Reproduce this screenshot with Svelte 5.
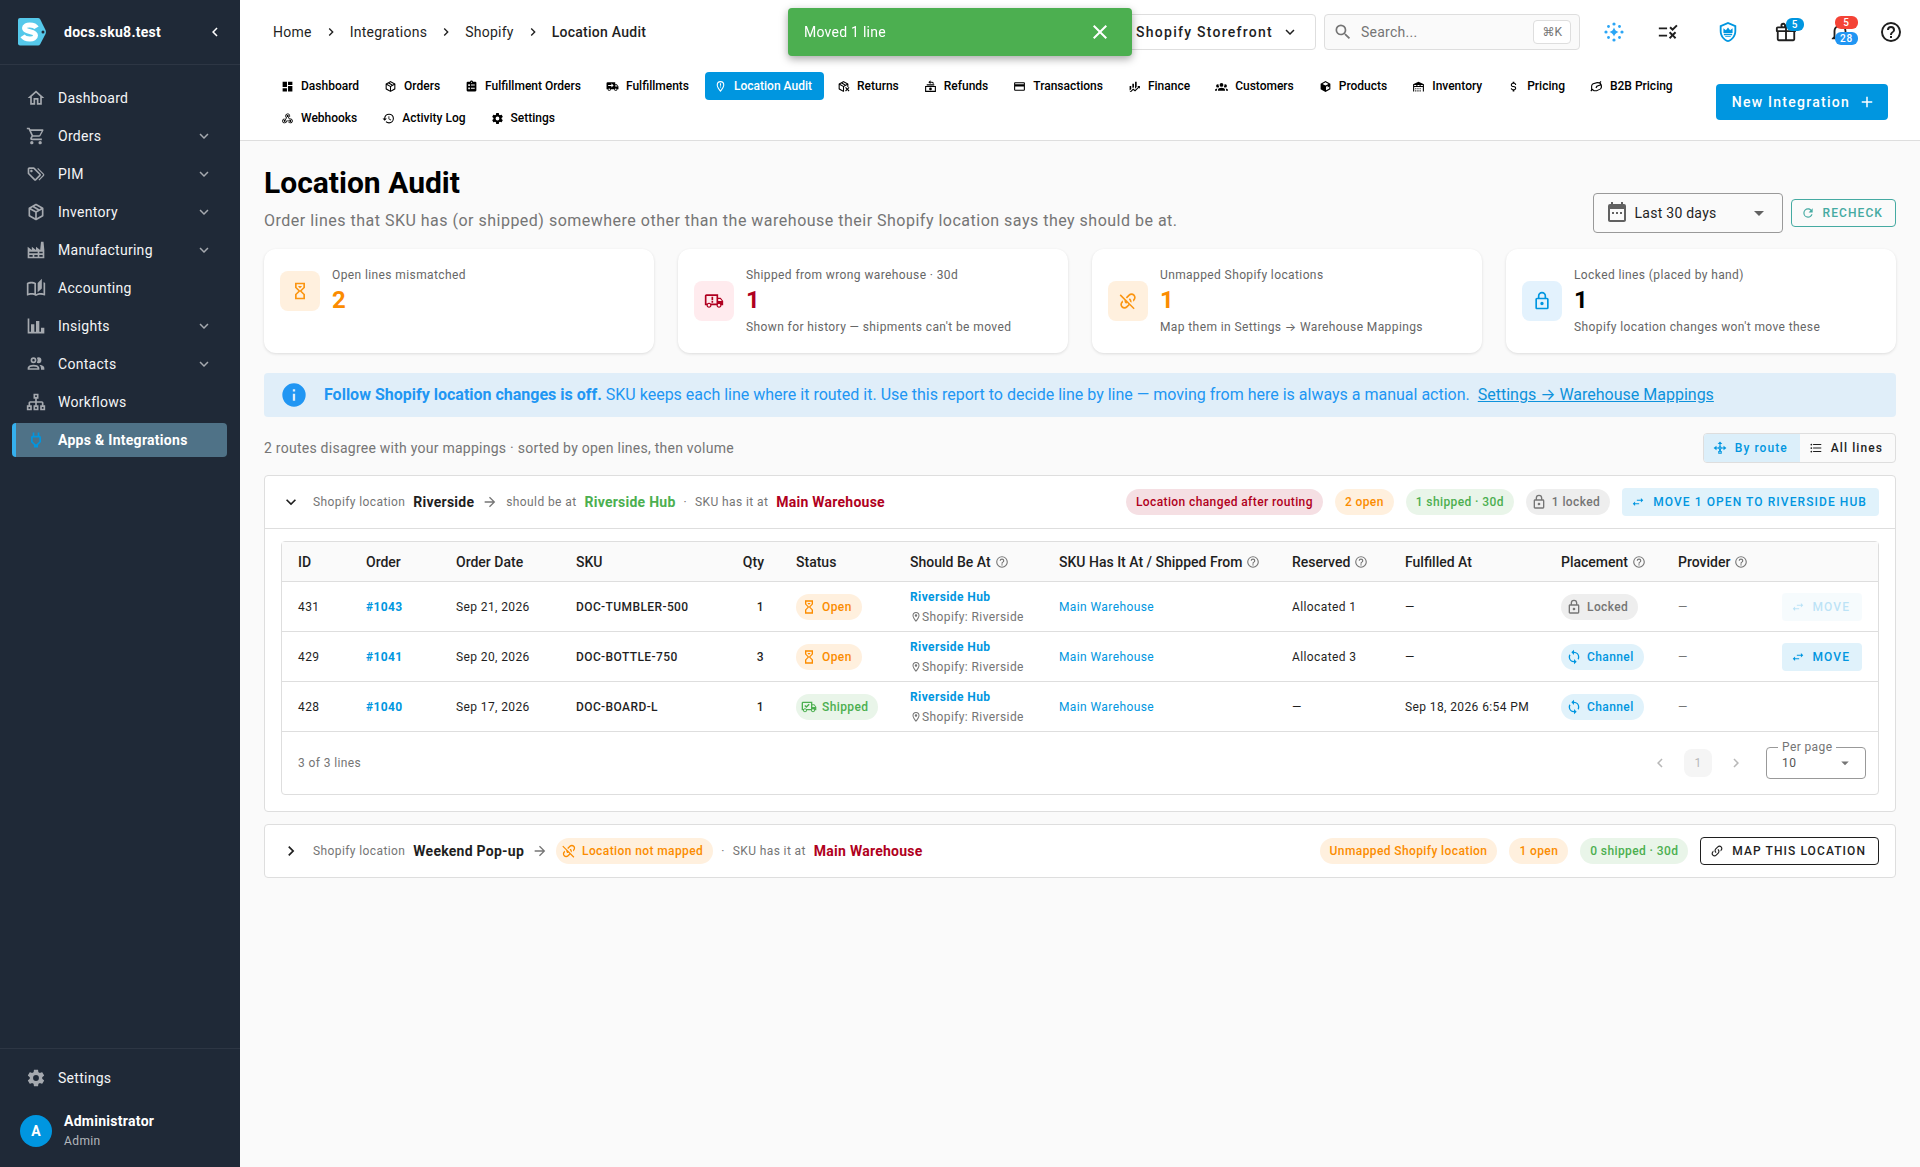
<script lang="ts">
  const icons: Record<string, string> = {
    home: "M12 5.69L17 10.19V18H15V12H9V18H7V10.19L12 5.69M12 3L2 12H5V20H11V14H13V20H19V12H22",
    cart: "M17,18A2,2 0 0,1 19,20A2,2 0 0,1 17,22C15.89,22 15,21.1 15,20C15,18.89 15.89,18 17,18M1,2H4.27L5.21,4H20A1,1 0 0,1 21,5C21,5.17 20.95,5.34 20.88,5.5L17.3,11.97C16.96,12.58 16.3,13 15.55,13H8.1L7.2,14.63L7.17,14.75A0.25,0.25 0 0,0 7.42,15H19V17H7C5.89,17 5,16.1 5,15C5,14.65 5.09,14.32 5.24,14.04L6.6,11.59L3,4H1V2M7,18A2,2 0 0,1 9,20A2,2 0 0,1 7,22C5.89,22 5,21.1 5,20C5,18.89 5.89,18 7,18M16,11L18.78,6H6.14L8.5,11H16Z",
    tags: "M6.5 10C7.3 10 8 9.3 8 8.5S7.3 7 6.5 7 5 7.7 5 8.5 5.7 10 6.5 10M9 6L16 13L11 18L4 11V6H9M9 4H4C2.9 4 2 4.9 2 6V11C2 11.6 2.2 12.1 2.6 12.4L9.6 19.4C9.9 19.8 10.4 20 11 20S12.1 19.8 12.4 19.4L17.4 14.4C17.8 14 18 13.5 18 13C18 12.4 17.8 11.9 17.4 11.6L10.4 4.6C10.1 4.2 9.6 4 9 4M13.5 5.7L14.5 4.7L21.4 11.6C21.8 12 22 12.5 22 13S21.8 14.1 21.4 14.4L16 19.8L15 18.8L20.7 13L13.5 5.7Z",
    box: "M21,16.5C21,16.88 20.79,17.21 20.47,17.38L12.57,21.82C12.41,21.94 12.21,22 12,22C11.79,22 11.59,21.94 11.43,21.82L3.53,17.38C3.21,17.21 3,16.88 3,16.5V7.5C3,7.12 3.21,6.79 3.53,6.62L11.43,2.18C11.59,2.06 11.79,2 12,2C12.21,2 12.41,2.06 12.57,2.18L20.47,6.62C20.79,6.79 21,7.12 21,7.5V16.5M12,4.15L10.11,5.22L16,8.61L17.96,7.5L12,4.15M6.04,7.5L12,10.85L13.96,9.75L8.08,6.35L6.04,7.5M5,15.91L11,19.29V12.58L5,9.21V15.91M19,15.91V9.21L13,12.58V19.29L19,15.91Z",
    factory: "M4,18V20H8V18H4M4,14V16H14V14H4M10,18V20H14V18H10M16,14V16H20V14H16M16,18V20H20V18H16M2,22V8L7,12V8L12,12V8L17,12L18,2H21L22,12V22H2Z",
    book: "M19 1L14 6V17L19 12.5V1M21 5V18.5C19.9 18.15 18.7 18 17.5 18C15.8 18 13.35 18.65 12 19.5V6C10.55 4.9 8.45 4.5 6.5 4.5C4.55 4.5 2.45 4.9 1 6V20.65C1 20.9 1.25 21.15 1.5 21.15C1.6 21.15 1.65 21.1 1.75 21.1C3.1 20.45 5.05 20 6.5 20C8.45 20 10.55 20.4 12 21.5C13.35 20.65 15.8 20 17.5 20C19.15 20 20.85 20.3 22.25 21.05C22.35 21.1 22.4 21.1 22.5 21.1C22.75 21.1 23 20.85 23 20.6V6C22.4 5.55 21.75 5.25 21 5M10 18.41C8.75 18.09 7.5 18 6.5 18C5.44 18 4.18 18.19 3 18.5V7.13C3.91 6.73 5.14 6.5 6.5 6.5C7.86 6.5 9.09 6.73 10 7.13V18.41Z",
    chart: "M22,21H2V3H4V19H6V10H10V19H12V6H16V19H18V14H22V21Z",
    contacts: "M13.07 10.41A5 5 0 0 0 13.07 4.59A3.39 3.39 0 0 1 15 4A3.5 3.5 0 0 1 15 11A3.39 3.39 0 0 1 13.07 10.41M5.5 7.5A3.5 3.5 0 1 1 9 11A3.5 3.5 0 0 1 5.5 7.5M7.5 7.5A1.5 1.5 0 1 0 9 6A1.5 1.5 0 0 0 7.5 7.5M16 17V19H2V17S2 13 9 13 16 17 16 17M14 17C13.86 16.22 12.67 15 9 15S4.07 16.31 4 17M15.95 13A5.32 5.32 0 0 1 18 17V19H22V17S22 13.37 15.94 13Z",
    sitemap: "M9 2V8H11V11H5C3.89 11 3 11.89 3 13V16H1V22H7V16H5V13H11V16H9V22H15V16H13V13H19V16H17V22H23V16H21V13C21 11.89 20.11 11 19 11H13V8H15V2H9M11 4H13V6H11V4M3 18H5V20H3V18M11 18H13V20H11V18M19 18H21V20H19V18Z",
    plug: "M16 7V3H14V7H10V3H8V7C7 7 6 8 6 9V14.5L9.5 18V21H14.5V18L18 14.5V9C18 8 17 7 16 7M16 13.67L12.67 17H11.33L8 13.67V9H16V13.67Z",
    cog: "M12,15.5A3.5,3.5 0 0,1 8.5,12A3.5,3.5 0 0,1 12,8.5A3.5,3.5 0 0,1 15.5,12A3.5,3.5 0 0,1 12,15.5M19.43,12.97C19.47,12.65 19.5,12.33 19.5,12C19.5,11.67 19.47,11.34 19.43,11L21.54,9.37C21.73,9.22 21.78,8.95 21.66,8.73L19.66,5.27C19.54,5.05 19.27,4.96 19.05,5.05L16.56,6.05C16.04,5.66 15.5,5.32 14.87,5.07L14.5,2.42C14.46,2.18 14.25,2 14,2H10C9.75,2 9.54,2.18 9.5,2.42L9.13,5.07C8.5,5.32 7.96,5.66 7.44,6.05L4.95,5.05C4.73,4.96 4.46,5.05 4.34,5.27L2.34,8.73C2.21,8.95 2.27,9.22 2.46,9.37L4.57,11C4.53,11.34 4.5,11.67 4.5,12C4.5,12.33 4.53,12.65 4.57,12.97L2.46,14.63C2.27,14.78 2.21,15.05 2.34,15.27L4.34,18.73C4.46,18.95 4.73,19.03 4.95,18.95L7.44,17.94C7.96,18.34 8.5,18.68 9.13,18.93L9.5,21.58C9.54,21.82 9.75,22 10,22H14C14.25,22 14.46,21.82 14.5,21.58L14.87,18.93C15.5,18.67 16.04,18.34 16.56,17.94L19.05,18.95C19.27,19.03 19.54,18.95 19.66,18.73L21.66,15.27C21.78,15.05 21.73,14.78 21.54,14.63L19.43,12.97Z",
    down: "M7.41,8.58L12,13.17L16.59,8.58L18,10L12,16L6,10L7.41,8.58Z",
    right: "M8.59,16.58L13.17,12L8.59,7.41L10,6L16,12L10,18L8.59,16.58Z",
    left: "M15.41,16.58L10.83,12L15.41,7.41L14,6L8,12L14,18L15.41,16.58Z",
    caret: "M7,10L12,15L17,10H7Z",
    plus: "M19,13H13V19H11V13H5V11H11V5H13V11H19V13Z",
    close: "M19,6.41L17.59,5L12,10.59L6.41,5L5,6.41L10.59,12L5,17.59L6.41,19L12,13.41L17.59,19L19,17.59L13.41,12L19,6.41Z",
    arrow: "M4,11V13H16L10.5,18.5L11.92,19.92L19.84,12L11.92,4.08L10.5,5.5L16,11H4Z",
    search: "M9.5,3A6.5,6.5 0 0,1 16,9.5C16,11.11 15.41,12.59 14.44,13.73L14.71,14H15.5L20.5,19L19,20.5L14,15.5V14.71L13.73,14.44C12.59,15.41 11.11,16 9.5,16A6.5,6.5 0 0,1 3,9.5A6.5,6.5 0 0,1 9.5,3M9.5,5C7,5 5,7 5,9.5C5,12 7,14 9.5,14C12,14 14,12 14,9.5C14,7 12,5 9.5,5Z",
    dashboard: "M13,3V9H21V3M13,21H21V11H13M3,21H11V15H3M3,13H11V3H3V13Z",
    clipboard: "M19,3H14.82C14.4,1.84 13.3,1 12,1C10.7,1 9.6,1.84 9.18,3H5A2,2 0 0,0 3,5V19A2,2 0 0,0 5,21H19A2,2 0 0,0 21,19V5A2,2 0 0,0 19,3M12,3A1,1 0 0,1 13,4A1,1 0 0,1 12,5A1,1 0 0,1 11,4A1,1 0 0,1 12,3M6,8H9V11H6V8M11,8.5H18V10H11V8.5M6,14H9V17H6V14M11,14.5H18V16H11V14.5Z",
    truck: "M3,4A2,2 0 0,0 1,6V17H3A3,3 0 0,0 6,20A3,3 0 0,0 9,17H15A3,3 0 0,0 18,20A3,3 0 0,0 21,17H23V12L20,8H17V4H3M10,6L14,10L10,14V11H4V9H10V6M17,9.5H19.5L21.47,12H17V9.5M6,15.5A1.5,1.5 0 0,1 7.5,17A1.5,1.5 0 0,1 6,18.5A1.5,1.5 0 0,1 4.5,17A1.5,1.5 0 0,1 6,15.5M18,15.5A1.5,1.5 0 0,1 19.5,17A1.5,1.5 0 0,1 18,18.5A1.5,1.5 0 0,1 16.5,17A1.5,1.5 0 0,1 18,15.5Z",
    pinAlert: "M11,6H13V10.5H11V6M11,12H13V14H11V12M12,2A7,7 0 0,1 19,9C19,14.25 12,22 12,22C12,22 5,14.25 5,9A7,7 0 0,1 12,2M12,4A5,5 0 0,0 7,9C7,10 7,12 12,18.71C17,12 17,10 17,9A5,5 0 0,0 12,4Z",
    pin: "M12,6.5A2.5,2.5 0 0,1 14.5,9A2.5,2.5 0 0,1 12,11.5A2.5,2.5 0 0,1 9.5,9A2.5,2.5 0 0,1 12,6.5M12,2A7,7 0 0,1 19,9C19,14.25 12,22 12,22C12,22 5,14.25 5,9A7,7 0 0,1 12,2M12,4A5,5 0 0,0 7,9C7,10 7,12 12,18.71C17,12 17,10 17,9A5,5 0 0,0 12,4Z",
    returns: "M12,2L11.43,2.18L3.53,6.62L3,7.5V16.5L3.53,17.38L11.43,21.82L13,21.5V12.58L19,9.21V13H21V7.5L20.47,6.62L12.57,2.18L12,2M12,4.15L17.96,7.5L16,8.61L10.11,5.22L12,4.15M8.08,6.35L13.96,9.75L12,10.85L6.04,7.5L8.08,6.35M5,9.21L11,12.58V19.29L5,15.91V9.21M15,14.5L17.5,17L15,19.5L16.5,21L19,18.5L21.5,21L23,19.5L20.5,17L23,14.5L21.5,13L19,15.5L16.5,13L15,14.5Z",
    refunds: "M2,11H22V22H2V11M4,13V20H20V13H4M12,14A2.5,2.5 0 0,1 12,19A2.5,2.5 0 0,1 12,14M5,8H19V10H5V8M8,4L12,0.5V3H15A3,3 0 0,1 18,6V7H16V6A1,1 0 0,0 15,5H12V7.5L8,4Z",
    card: "M20,8H4V6H20M20,18H4V12H20M20,4H4C2.89,4 2,4.89 2,6V18A2,2 0 0,0 4,20H20A2,2 0 0,0 22,18V6C22,4.89 21.1,4 20,4Z",
    finance: "M6,16.5L3,19.44V11H6M11,14.66L9.43,13.32L8,14.64V7H11M16,13L13,16V3H16M18.81,12.81L17,11H22V16L20.21,14.21L13,21.36L9.53,18.34L5.75,22H3L9.47,15.66L13,18.64",
    group: "M12,5.5A3.5,3.5 0 0,1 15.5,9A3.5,3.5 0 0,1 12,12.5A3.5,3.5 0 0,1 8.5,9A3.5,3.5 0 0,1 12,5.5M5,8C5.56,8 6.08,8.15 6.53,8.42C6.38,9.85 6.8,11.27 7.66,12.38C7.16,13.34 6.16,14 5,14A3,3 0 0,1 2,11A3,3 0 0,1 5,8M19,8A3,3 0 0,1 22,11A3,3 0 0,1 19,14C17.84,14 16.84,13.34 16.34,12.38C17.2,11.27 17.62,9.85 17.47,8.42C17.92,8.15 18.44,8 19,8M5.5,18.25C5.5,16.18 8.41,14.5 12,14.5C15.59,14.5 18.5,16.18 18.5,18.25V20H5.5V18.25M0,20V18.5C0,17.11 1.89,15.94 4.45,15.6C3.86,16.28 3.5,17.22 3.5,18.25V20H0M24,20H20.5V18.25C20.5,17.22 20.14,16.28 19.55,15.6C22.11,15.94 24,17.11 24,18.5V20Z",
    product: "M12,2L21,7V17L12,22L3,17V7L12,2M12,4.2L6.5,7.3L12,10.3L17.5,7.3L12,4.2M13,12.3V19L19,15.7V12L16,13.7V10.7L13,12.3Z",
    warehouse: "M6,19H8V21H6V19M12,3L2,8V21H4V13H20V21H22V8L12,3M8,11H4V9H8V11M14,11H10V9H14V11M20,11H16V9H20V11M6,15H8V17H6V15M10,15H12V17H10V15M10,19H12V21H10V19M14,19H16V21H14V19M14,15H16V17H14V15Z",
    dollar: "M7,15H9C9,16.08 10.37,17 12,17C13.63,17 15,16.08 15,15C15,13.9 13.96,13.5 11.76,12.97C9.64,12.44 7,11.78 7,9C7,7.21 8.47,5.69 10.5,5.18V3H13.5V5.18C15.53,5.69 17,7.21 17,9H15C15,7.92 13.63,7 12,7C10.37,7 9,7.92 9,9C9,10.1 10.04,10.5 12.24,11.03C14.36,11.56 17,12.22 17,15C17,16.79 15.53,18.31 13.5,18.82V21H10.5V18.82C8.47,18.31 7,16.79 7,15Z",
    history: "M13.5,8H12V13L16.28,15.54L17,14.33L13.5,12.25V8M13,3A9,9 0 0,0 4,12H1L4.96,16.03L9,12H6A7,7 0 0,1 13,5A7,7 0 0,1 20,12A7,7 0 0,1 13,19C11.07,19 9.32,18.21 8.06,16.94L6.64,18.36C8.27,20 10.5,21 13,21A9,9 0 0,0 22,12A9,9 0 0,0 13,3",
    webhook: "M10.46,19C9,21.07 6.15,21.59 4.09,20.15C2.04,18.71 1.56,15.84 3,13.75C3.87,12.5 5.21,11.83 6.58,11.77L6.63,13.2C5.72,13.27 4.84,13.74 4.27,14.56C3.27,16 3.58,17.94 4.95,18.91C6.33,19.87 8.26,19.5 9.26,18.07C9.57,17.62 9.75,17.13 9.82,16.63V15.62L15.4,15.58L15.47,15.47C16,14.55 17.15,14.23 18.05,14.75C18.95,15.27 19.26,16.43 18.73,17.35C18.2,18.26 17.04,18.58 16.14,18.06C15.73,17.83 15.44,17.46 15.31,17.04L11.24,17.06C11.13,17.73 10.87,18.38 10.46,19M17.74,11.86C20.27,12.17 22.07,14.44 21.76,16.93C21.45,19.43 19.15,21.2 16.62,20.89C15.13,20.71 13.9,19.86 13.19,18.68L14.43,17.96C14.92,18.73 15.75,19.28 16.75,19.41C18.5,19.62 20.05,18.43 20.26,16.76C20.47,15.09 19.23,13.56 17.5,13.35C16.96,13.29 16.44,13.36 15.97,13.53L15.12,13.97L12.54,9.2H12.32C11.26,9.16 10.41,8.29 10.44,7.25C10.47,6.21 11.4,5.4 12.45,5.44C13.5,5.5 14.33,6.35 14.3,7.39C14.28,7.83 14.11,8.23 13.84,8.54L15.74,12.05C16.36,11.85 17.04,11.78 17.74,11.86M8.25,9.14C7.25,6.79 8.31,4.1 10.62,3.12C12.94,2.14 15.62,3.25 16.62,5.6C17.21,6.97 17.09,8.47 16.42,9.67L15.18,8.95C15.6,8.14 15.67,7.15 15.27,6.22C14.59,4.62 12.78,3.85 11.23,4.5C9.67,5.16 8.97,7 9.65,8.6C9.93,9.26 10.4,9.77 10.97,10.11L11.36,10.32L8.29,15.31C8.32,15.36 8.36,15.42 8.39,15.5C8.88,16.41 8.54,17.56 7.62,18.05C6.71,18.54 5.56,18.18 5.06,17.24C4.57,16.31 4.91,15.16 5.83,14.67C6.22,14.46 6.65,14.41 7.06,14.5L9.37,10.73C8.9,10.3 8.5,9.76 8.25,9.14Z",
    handshake: "M21.7,8.7L19.4,4.6L21,3.5L20,2L17.2,4.1L13.2,3.6L5.4,6.2C3.5,7.2 2,9.8 2,12V18L0.8,20L2.4,21L4.5,18.8L7,20.9H12.5L20,17C22,15.5 22.5,13 22,10.5L21.7,8.7M18.5,16L12,19H8L4,15.5V12C4,10.3 5,8.6 6.5,8L13,5.8L17.5,6.4L18.5,8.2L12,10.5L10,14L12,15.3L14,12L19.5,10.3C20.4,12.3 20,14.5 18.5,16Z",
    checks: "M2,7H11V9H2V7M2,15H11V17H2V15M22.5,5.5L17,11L13.5,7.5L15,6L17,8L21,4L22.5,5.5M21,13L18.5,15.5L21,18L19.5,19.5L17,17L14.5,19.5L13,18L15.5,15.5L13,13L14.5,11.5L17,14L19.5,11.5L21,13Z",
    shield: "M21,11C21,16.55 17.16,21.74 12,23C6.84,21.74 3,16.55 3,11V5L12,1L21,5V11M12,21C15.75,20 19,15.54 19,11.22V6.3L12,3.18L5,6.3V11.22C5,15.54 8.25,20 12,21M7,8L9.7,10L12,7L14.3,10L17,8V13H7V8M7.5,14H16.5V15.5H7.5V14M9,16.5H15V17.5H9V16.5Z",
    gift: "M22,12V20A2,2 0 0,1 20,22H4A2,2 0 0,1 2,20V12A1,1 0 0,1 1,11V8A2,2 0 0,1 3,6H6.17C6.06,5.69 6,5.35 6,5A3,3 0 0,1 9,2C10,2 10.88,2.5 11.43,3.24V3.23L12,4L12.57,3.23V3.24C13.12,2.5 14,2 15,2A3,3 0 0,1 18,5C18,5.35 17.94,5.69 17.83,6H21A2,2 0 0,1 23,8V11A1,1 0 0,1 22,12M4,20H11V12H4V20M20,20V12H13V20H20M9,4A1,1 0 0,0 8,5A1,1 0 0,0 9,6A1,1 0 0,0 10,5A1,1 0 0,0 9,4M15,4A1,1 0 0,0 14,5A1,1 0 0,0 15,6A1,1 0 0,0 16,5A1,1 0 0,0 15,4M3,8V10H11V8H3M13,8V10H21V8H13Z",
    bell: "M10 21H14C14 22.1 13.1 23 12 23S10 22.1 10 21M21 19V20H3V19L5 17V11C5 7.9 7 5.2 10 4.3V4C10 2.9 10.9 2 12 2S14 2.9 14 4V4.3C17 5.2 19 7.9 19 11V17L21 19M17 11C17 8.2 14.8 6 12 6S7 8.2 7 11V18H17V11Z",
    help: "M11,18H13V16H11V18M12,2A10,10 0 0,0 2,12A10,10 0 0,0 12,22A10,10 0 0,0 22,12A10,10 0 0,0 12,2M12,20C7.59,20 4,16.41 4,12C4,7.59 7.59,4 12,4C16.41,4 20,7.59 20,12C20,16.41 16.41,20 12,20M12,6A4,4 0 0,0 8,10H10A2,2 0 0,1 12,8A2,2 0 0,1 14,10C14,12 11,11.75 11,15H13C13,12.75 16,12.5 16,10A4,4 0 0,0 12,6Z",
    calendar: "M7,11H9V13H7V11M21,5V19C21,20.11 20.11,21 19,21H5C3.89,21 3,20.1 3,19V5A2,2 0 0,1 5,3H6V1H8V3H16V1H18V3H19A2,2 0 0,1 21,5M5,19H19V8H5V19M15,13V11H17V13H15M11,13V11H13V13H11Z",
    refresh: "M17.65,6.35C16.2,4.9 14.21,4 12,4A8,8 0 0,0 4,12A8,8 0 0,0 12,20C15.73,20 18.84,17.45 19.73,14H17.65C16.83,16.33 14.61,18 12,18A6,6 0 0,1 6,12A6,6 0 0,1 12,6C13.66,6 15.14,6.69 16.22,7.78L13,11H20V4L17.65,6.35Z",
    hourglass: "M6,2H18V8L14,12L18,16V22H6V16L10,12L6,8V2M16,16.5L12,12.5L8,16.5V20H16V16.5M12,11.5L16,7.5V4H8V7.5L12,11.5M10,6H14V6.75L12,8.75L10,6.75V6Z",
    truckAlert: "M18 18.5C18.83 18.5 19.5 17.83 19.5 17S18.83 15.5 18 15.5 16.5 16.17 16.5 17 17.17 18.5 18 18.5M19.5 9.5H17V12H21.46L19.5 9.5M6 18.5C6.83 18.5 7.5 17.83 7.5 17S6.83 15.5 6 15.5 4.5 16.17 4.5 17 5.17 18.5 6 18.5M20 8L23 12V17H21C21 18.66 19.66 20 18 20S15 18.66 15 17H9C9 18.66 7.66 20 6 20S3 18.66 3 17H1V6C1 4.89 1.89 4 3 4H17V8H20M3 6V15H3.76C4.31 14.39 5.11 14 6 14S7.69 14.39 8.24 15H15V6H3M9 7H11V11H9V7M9 12H11V14H9V12Z",
    truckCheck: "M18 18.5C18.83 18.5 19.5 17.83 19.5 17S18.83 15.5 18 15.5 16.5 16.17 16.5 17 17.17 18.5 18 18.5M19.5 9.5H17V12H21.46L19.5 9.5M6 18.5C6.83 18.5 7.5 17.83 7.5 17S6.83 15.5 6 15.5 4.5 16.17 4.5 17 5.17 18.5 6 18.5M20 8L23 12V17H21C21 18.66 19.66 20 18 20S15 18.66 15 17H9C9 18.66 7.66 20 6 20S3 18.66 3 17H1V6C1 4.89 1.89 4 3 4H17V8H20M3 6V15H3.76C4.31 14.39 5.11 14 6 14S7.69 14.39 8.24 15H15V6H3M5 10.5L6.5 9L8 10.5L11.5 7L13 8.5L8 13.5L5 10.5Z",
    unlink: "M2,5.27L3.28,4L20,20.72L18.73,22L13.9,17.17L11.29,19.78C9.34,21.73 6.17,21.73 4.22,19.78C2.27,17.83 2.27,14.66 4.22,12.71L5.71,11.22C5.7,12.04 5.83,12.86 6.11,13.65L5.64,14.12C4.46,15.29 4.46,17.19 5.64,18.36C6.81,19.54 8.71,19.54 9.88,18.36L12.5,15.76L10.88,14.15C10.87,14.39 10.77,14.64 10.59,14.83C10.2,15.22 9.56,15.22 9.17,14.83C8.12,13.77 7.63,12.37 7.72,11L2,5.27M12.71,4.22C14.66,2.27 17.83,2.27 19.78,4.22C21.73,6.17 21.73,9.34 19.78,11.29L18.29,12.78C18.3,11.96 18.17,11.14 17.89,10.36L18.36,9.88C19.54,8.71 19.54,6.81 18.36,5.64C17.19,4.46 15.29,4.46 14.12,5.64L10.79,8.97L9.38,7.55L12.71,4.22M13.41,9.17C13.8,8.78 14.44,8.78 14.83,9.17C16.2,10.54 16.61,12.5 16.06,14.23L14.28,12.46C14.23,11.78 13.94,11.11 13.41,10.59C13,10.2 13,9.56 13.41,9.17Z",
    link: "M10.59,13.41C11,13.8 11,14.44 10.59,14.83C10.2,15.22 9.56,15.22 9.17,14.83C7.22,12.88 7.22,9.71 9.17,7.76V7.76L12.71,4.22C14.66,2.27 17.83,2.27 19.78,4.22C21.73,6.17 21.73,9.34 19.78,11.29L18.29,12.78C18.3,11.96 18.17,11.14 17.89,10.36L18.36,9.88C19.54,8.71 19.54,6.81 18.36,5.64C17.19,4.46 15.29,4.46 14.12,5.64L10.59,9.17C9.41,10.34 9.41,12.24 10.59,13.41M13.41,9.17C13.8,8.78 14.44,8.78 14.83,9.17C16.78,11.12 16.78,14.29 14.83,16.24V16.24L11.29,19.78C9.34,21.73 6.17,21.73 4.22,19.78C2.27,17.83 2.27,14.66 4.22,12.71L5.71,11.22C5.7,12.04 5.83,12.86 6.11,13.65L5.64,14.12C4.46,15.29 4.46,17.19 5.64,18.36C6.81,19.54 8.71,19.54 9.88,18.36L13.41,14.83C14.59,13.66 14.59,11.76 13.41,10.59C13,10.2 13,9.56 13.41,9.17Z",
    lock: "M12,17C10.89,17 10,16.1 10,15C10,13.89 10.89,13 12,13A2,2 0 0,1 14,15A2,2 0 0,1 12,17M18,20V10H6V20H18M18,8A2,2 0 0,1 20,10V20A2,2 0 0,1 18,22H6C4.89,22 4,21.1 4,20V10C4,8.89 4.89,8 6,8H7V6A5,5 0 0,1 12,1A5,5 0 0,1 17,6V8H18M12,3A3,3 0 0,0 9,6V8H15V6A3,3 0 0,0 12,3Z",
    info: "M13,9H11V7H13M13,17H11V11H13M12,2A10,10 0 0,0 2,12A10,10 0 0,0 12,22A10,10 0 0,0 22,12A10,10 0 0,0 12,2Z",
    routes: "M12,1L16,5H13V9.2A3,3 0 0,1 14.8,11H18V8L23,12L18,16V13H14.8A3,3 0 0,1 13.5,14.6V17H15V22H9V17H10.5V14.6A3,3 0 0,1 9.2,13H6V16L1,12L6,8V11H9.2A3,3 0 0,1 11,9.2V5H8L12,1M12,11A1,1 0 0,0 12,13A1,1 0 0,0 12,11M11.2,18.5V20.5H12.800V18.5H11.2Z",
    list: "M7,5H21V7H7V5M7,13V11H21V13H7M4,4.5A1.5,1.5 0 0,1 5.5,6A1.5,1.5 0 0,1 4,7.5A1.5,1.5 0 0,1 2.5,6A1.5,1.5 0 0,1 4,4.5M4,10.5A1.5,1.5 0 0,1 5.5,12A1.5,1.5 0 0,1 4,13.5A1.5,1.5 0 0,1 2.5,12A1.5,1.5 0 0,1 4,10.5M7,19V17H21V19H7M4,16.5A1.5,1.5 0 0,1 5.5,18A1.5,1.5 0 0,1 4,19.5A1.5,1.5 0 0,1 2.5,18A1.5,1.5 0 0,1 4,16.5Z",
    swap: "M21,9L17,5V8H10V10H17V13M7,11L3,15L7,19V16H14V14H7V11Z",
    sync: "M12,18A6,6 0 0,1 6,12C6,11 6.25,10.03 6.7,9.2L5.24,7.74C4.46,8.97 4,10.43 4,12A8,8 0 0,0 12,20V23L16,19L12,15M12,4V1L8,5L12,9V6A6,6 0 0,1 18,12C18,13 17.75,13.97 17.3,14.8L18.76,16.26C19.54,15.03 20,13.57 20,12A8,8 0 0,0 12,4Z",
  };

  const nav = [
    { label: "Dashboard", icon: "home" },
    { label: "Orders", icon: "cart", menu: true },
    { label: "PIM", icon: "tags", menu: true },
    { label: "Inventory", icon: "box", menu: true },
    { label: "Manufacturing", icon: "factory", menu: true },
    { label: "Accounting", icon: "book" },
    { label: "Insights", icon: "chart", menu: true },
    { label: "Contacts", icon: "contacts", menu: true },
    { label: "Workflows", icon: "sitemap" },
    { label: "Apps & Integrations", icon: "plug", active: true },
  ];

  const tabs = [
    ["Dashboard", "dashboard"],
    ["Orders", "box"],
    ["Fulfillment Orders", "clipboard"],
    ["Fulfillments", "truck"],
    ["Location Audit", "pinAlert"],
    ["Returns", "returns"],
    ["Refunds", "refunds"],
    ["Transactions", "card"],
    ["Finance", "finance"],
    ["Customers", "group"],
    ["Products", "product"],
    ["Inventory", "warehouse"],
    ["Pricing", "dollar"],
    ["B2B Pricing", "handshake"],
    ["Webhooks", "webhook"],
    ["Activity Log", "history"],
    ["Settings", "cog"],
  ];

  const stats = [
    { label: "Open lines mismatched", value: 2, icon: "hourglass", tone: "orange" },
    {
      label: "Shipped from wrong warehouse · 30d",
      value: 1,
      note: "Shown for history — shipments can't be moved",
      icon: "truckAlert",
      tone: "red",
    },
    {
      label: "Unmapped Shopify locations",
      value: 1,
      note: "Map them in Settings → Warehouse Mappings",
      icon: "unlink",
      tone: "orange",
    },
    {
      label: "Locked lines (placed by hand)",
      value: 1,
      note: "Shopify location changes won't move these",
      icon: "lock",
      tone: "blue",
    },
  ];

  const columns = [
    { label: "ID", cls: "c-id" },
    { label: "Order", cls: "c-order" },
    { label: "Order Date", cls: "c-date" },
    { label: "SKU", cls: "c-sku" },
    { label: "Qty", cls: "c-qty" },
    { label: "Status", cls: "c-status" },
    { label: "Should Be At", cls: "c-should", help: true },
    { label: "SKU Has It At / Shipped From", cls: "c-has", help: true },
    { label: "Reserved", cls: "c-reserved", help: true },
    { label: "Fulfilled At", cls: "c-fulfilled" },
    { label: "Placement", cls: "c-placement", help: true },
    { label: "Provider", cls: "c-provider", help: true },
  ];

  const lines = [
    { id: 431, order: "#1043", date: "Sep 21, 2026", sku: "DOC-TUMBLER-500", qty: 1, open: true, reserved: "Allocated 1", fulfilled: "—", locked: true },
    { id: 429, order: "#1041", date: "Sep 20, 2026", sku: "DOC-BOTTLE-750", qty: 3, open: true, reserved: "Allocated 3", fulfilled: "—", locked: false },
    { id: 428, order: "#1040", date: "Sep 17, 2026", sku: "DOC-BOARD-L", qty: 1, open: false, reserved: "—", fulfilled: "Sep 18, 2026 6:54 PM", locked: false },
  ];

  let toast = $state(true);
  let view = $state("route");
</script>

{#snippet icon(name: string, size: number)}
  <svg width={size} height={size} viewBox="0 0 24 24" aria-hidden="true">
    <path fill="currentColor" fill-rule="evenodd" d={icons[name]} />
  </svg>
{/snippet}

<div class="app">
  <aside class="sidebar">
    <div class="brand">
      <svg class="logo" width="28" height="28" viewBox="0 0 28 28" aria-hidden="true">
        <path fill="#55c8ea" d="M2 0H20Q21.500 0 22.300 1.400L27.500 12Q28.400 14 27.500 16L22.300 26Q21.500 27.500 20 27.500H2Q0 27.500 0 25.500V2Q0 0 2 0Z" />
        <circle cx="25" cy="14" r="1.500" fill="#1f2937" />
        <path
          fill="none"
          stroke="#fff"
          stroke-width="5"
          d="M18.500 9.800C16.500 6.200 6.500 5.600 6.500 10C6.500 14.800 17.500 12.400 17.500 17.400C17.500 22 7.500 22.200 4.500 17.800"
        />
      </svg>
      <strong>docs.sku8.test</strong>
      <button class="collapse" aria-label="Collapse sidebar">{@render icon("left", 18)}</button>
    </div>

    <nav class="menu" aria-label="Main">
      {#each nav as item}
        <a href="#{item.icon}" class="menu-item" class:active={item.active}>
          {@render icon(item.icon, 20)}
          <span>{item.label}</span>
          {#if item.menu}<i class="menu-chevron">{@render icon("down", 18)}</i>{/if}
        </a>
      {/each}
    </nav>

    <div class="sidebar-foot">
      <a href="#settings" class="menu-item">
        {@render icon("cog", 20)}
        <span>Settings</span>
      </a>
      <div class="user">
        <div class="avatar">A</div>
        <div>
          <strong>Administrator</strong>
          <small>Admin</small>
        </div>
      </div>
    </div>
  </aside>

  <div class="page">
    <header class="topbar">
      <nav class="crumbs" aria-label="Breadcrumb">
        <a href="#home">Home</a>
        {@render icon("right", 16)}
        <a href="#integrations">Integrations</a>
        {@render icon("right", 16)}
        <a href="#shopify">Shopify</a>
        {@render icon("right", 16)}
        <span class="current">Location Audit</span>
      </nav>

      <button class="store">
        <span>Shopify Storefront</span>
        {@render icon("down", 18)}
      </button>

      <label class="search">
        {@render icon("search", 20)}
        <input type="text" placeholder="Search..." aria-label="Search" />
        <kbd>⌘K</kbd>
      </label>

      <div class="tools">
        <button class="sky" aria-label="Assistant">
          <svg width="20" height="20" viewBox="0 0 20 20" aria-hidden="true">
            <g fill="currentColor">
              <path d="M10 5.500q1 3.500 4.500 4.500q-3.500 1-4.500 4.500q-1-3.500-4.500-4.500q3.500-1 4.500-4.500z" />
              <circle cx="10" cy="2" r="1.600" />
              <circle cx="10" cy="18" r="1.600" />
              <circle cx="2" cy="10" r="1.600" />
              <circle cx="18" cy="10" r="1.600" />
              <circle cx="4.500" cy="4.500" r="1.400" />
              <circle cx="15.500" cy="4.500" r="1.400" />
              <circle cx="4.500" cy="15.500" r="1.400" />
              <circle cx="15.500" cy="15.500" r="1.400" />
            </g>
          </svg>
        </button>
        <button aria-label="Tasks">{@render icon("checks", 22)}</button>
        <button class="primary-text" aria-label="Admin">{@render icon("shield", 22)}</button>
        <button aria-label="What's new">
          {@render icon("gift", 22)}
          <span class="badge badge-gift">5</span>
        </button>
        <button aria-label="Notifications">
          {@render icon("bell", 22)}
          <span class="badge badge-alert">5</span>
          <span class="badge badge-count">28</span>
        </button>
        <button aria-label="Help">{@render icon("help", 24)}</button>
      </div>
    </header>

    <div class="subbar">
      <nav class="tabs" aria-label="Shopify">
        {#each tabs as [label, glyph]}
          <a href="#{glyph}" class="tab" class:selected={label === "Location Audit"}>
            {@render icon(glyph, 13)}
            {label}
          </a>
        {/each}
      </nav>
      <button class="new-btn">
        New Integration
        {@render icon("plus", 18)}
      </button>
    </div>

    <main>
      <div class="title-row">
        <div>
          <h1>Location Audit</h1>
          <p>Order lines that SKU has (or shipped) somewhere other than the warehouse their Shopify location says they should be at.</p>
        </div>
        <div class="title-actions">
          <label class="range">
            {@render icon("calendar", 24)}
            <select aria-label="Date range">
              <option>Last 30 days</option>
              <option>Last 90 days</option>
            </select>
            {@render icon("caret", 24)}
          </label>
          <button class="btn teal">{@render icon("refresh", 14)}RECHECK</button>
        </div>
      </div>

      <div class="stats">
        {#each stats as s}
          <section class="stat">
            <div class="stat-body">
              <div class="tile {s.tone}">{@render icon(s.icon, 20)}</div>
              <div>
                <div class="stat-text">{s.label}</div>
                <div class="stat-value {s.tone}">{s.value}</div>
                {#if s.note}<div class="stat-text">{s.note}</div>{/if}
              </div>
            </div>
          </section>
        {/each}
      </div>

      <div class="notice" role="status">
        {@render icon("info", 28)}
        <p>
          <b>Follow Shopify location changes is off.</b> SKU keeps each line where it routed it. Use this report to
          decide line by line — moving from here is always a manual action.
          <a href="#mappings">Settings → Warehouse Mappings</a>
        </p>
      </div>

      <div class="list-head">
        <p>2 routes disagree with your mappings · sorted by open lines, then volume</p>
        <div class="toggle">
          <button class:on={view === "route"} onclick={() => (view = "route")}>{@render icon("routes", 14)}By route</button>
          <button class:on={view === "lines"} onclick={() => (view = "lines")}>{@render icon("list", 14)}All lines</button>
        </div>
      </div>

      <section class="route">
        <div class="route-head">
          <button class="expander" aria-label="Collapse route" aria-expanded="true">{@render icon("down", 20)}</button>
          <div class="path">
            <span>Shopify location</span>
            <strong>Riverside</strong>
            {@render icon("arrow", 16)}
            <span>should be at</span>
            <strong class="ok">Riverside Hub</strong>
            <span>·</span>
            <span>SKU has it at</span>
            <strong class="bad">Main Warehouse</strong>
          </div>
          <div class="route-side">
            <span class="pill red">Location changed after routing</span>
            <span class="pill orange">2 open</span>
            <span class="pill green">1 shipped · 30d</span>
            <span class="pill grey with-icon">{@render icon("lock", 16)}1 locked</span>
            <button class="btn tonal">{@render icon("swap", 14)}MOVE 1 OPEN TO RIVERSIDE HUB</button>
          </div>
        </div>

        <div class="route-body">
          <div class="table-box">
            <table>
              <thead>
                <tr>
                  {#each columns as c}
                    <th class={c.cls}>
                      <span class="th">{c.label}{#if c.help}{@render icon("help", 14)}{/if}</span>
                    </th>
                  {/each}
                  <th class="c-action" aria-label="Actions"></th>
                </tr>
              </thead>
              <tbody>
                {#each lines as l}
                  <tr>
                    <td>{l.id}</td>
                    <td><a href="#order-{l.id}" class="strong">{l.order}</a></td>
                    <td>{l.date}</td>
                    <td class="medium">{l.sku}</td>
                    <td class="medium c-qty">{l.qty}</td>
                    <td>
                      {#if l.open}
                        <span class="pill orange with-icon">{@render icon("hourglass", 16)}Open</span>
                      {:else}
                        <span class="pill green with-icon">{@render icon("truckCheck", 16)}Shipped</span>
                      {/if}
                    </td>
                    <td>
                      <a href="#hub" class="strong">Riverside Hub</a>
                      <span class="place">{@render icon("pin", 12)}Shopify: Riverside</span>
                    </td>
                    <td><a href="#main">Main Warehouse</a></td>
                    <td>{l.reserved}</td>
                    <td>{l.fulfilled}</td>
                    <td>
                      {#if l.locked}
                        <span class="pill grey with-icon">{@render icon("lock", 16)}Locked</span>
                      {:else}
                        <span class="pill blue with-icon">{@render icon("sync", 16)}Channel</span>
                      {/if}
                    </td>
                    <td class="muted">—</td>
                    <td class="c-action">
                      {#if l.open}
                        <button class="btn tonal" disabled={l.locked}>{@render icon("swap", 14)}MOVE</button>
                      {/if}
                    </td>
                  </tr>
                {/each}
              </tbody>
            </table>
            <div class="table-foot">
              <span>3 of 3 lines</span>
              <div class="pager">
                <button disabled aria-label="Previous page">{@render icon("left", 18)}</button>
                <button disabled class="page-no">1</button>
                <button disabled aria-label="Next page">{@render icon("right", 18)}</button>
              </div>
              <div class="per-page">
                <label for="per-page">Per page</label>
                <select id="per-page">
                  <option>10</option>
                  <option>25</option>
                </select>
                {@render icon("caret", 18)}
              </div>
            </div>
          </div>
        </div>
      </section>

      <section class="route">
        <div class="route-head">
          <button class="expander" aria-label="Expand route" aria-expanded="false">{@render icon("right", 20)}</button>
          <div class="path">
            <span>Shopify location</span>
            <strong>Weekend Pop-up</strong>
            {@render icon("arrow", 16)}
            <span class="pill orange with-icon">{@render icon("unlink", 16)}Location not mapped</span>
            <span>·</span>
            <span>SKU has it at</span>
            <strong class="bad">Main Warehouse</strong>
          </div>
          <div class="route-side">
            <span class="pill orange">Unmapped Shopify location</span>
            <span class="pill orange">1 open</span>
            <span class="pill green">0 shipped · 30d</span>
            <button class="btn outlined">{@render icon("link", 14)}MAP THIS LOCATION</button>
          </div>
        </div>
      </section>
    </main>
  </div>

  {#if toast}
    <div class="toast" role="alert">
      <span>Moved 1 line</span>
      <button aria-label="Dismiss" onclick={() => (toast = false)}>{@render icon("close", 24)}</button>
    </div>
  {/if}
</div>

<style>
  :global(body) {
    background: #fafafa;
  }

  .app {
    --primary: #0096e0;
    --line: #dedede;
    --muted: #757575;
    display: flex;
    min-height: 100vh;
    font-family: Roboto, Inter, "Liberation Sans", sans-serif;
    font-size: 14px;
    line-height: 20px;
    color: #1f1f1f;
  }

  .app *,
  .app *::before {
    box-sizing: border-box;
  }

  button,
  input,
  select {
    font: inherit;
    color: inherit;
    letter-spacing: inherit;
    border: 0;
    margin: 0;
    padding: 0;
    background: none;
  }

  button {
    cursor: pointer;
  }

  a {
    color: inherit;
    text-decoration: none;
  }

  p,
  h1 {
    margin: 0;
  }

  svg {
    display: block;
    flex-shrink: 0;
  }

  /* ===== Sidebar ===== */
  .sidebar {
    position: sticky;
    top: 0;
    flex: 0 0 240px;
    height: 100vh;
    display: flex;
    flex-direction: column;
    background: #1f2937;
    color: #fff;
    letter-spacing: 0.02em;
  }

  .brand {
    display: flex;
    align-items: center;
    height: 65px;
    padding: 0 16px 0 18px;
    border-bottom: 1px solid #2d3644;
  }

  .brand strong {
    margin-left: 18px;
    font-weight: 700;
  }

  .collapse {
    margin-left: auto;
  }

  .menu {
    display: flex;
    flex-direction: column;
    gap: 4px;
    padding: 16px 13px 16px 12px;
  }

  .menu-item {
    display: flex;
    align-items: center;
    gap: 12px;
    height: 34px;
    padding: 0 14px;
    border-radius: 4px;
    color: #f4f5f6;
  }

  .menu-item > :global(svg),
  .menu-chevron {
    color: #a5a9af;
  }

  .menu-chevron {
    margin-left: auto;
  }

  .menu-item.active {
    border-left: 4px solid #35b0ee;
    padding-left: 10px;
    background: #4f7287;
    color: #fff;
    font-weight: 700;
  }

  .menu-item.active > :global(svg) {
    color: var(--primary);
  }

  .sidebar-foot {
    margin-top: auto;
    padding: 12px 12px 16px;
    border-top: 1px solid #2d3644;
  }

  .user {
    display: flex;
    align-items: center;
    gap: 12px;
    padding: 16px 8px 0;
  }

  .user strong,
  .user small {
    display: block;
  }

  .user small {
    font-size: 12px;
    letter-spacing: 0.033em;
    color: #b3b7bc;
  }

  .avatar {
    width: 32px;
    height: 32px;
    border-radius: 50%;
    background: var(--primary);
    font-weight: 700;
    line-height: 32px;
    text-align: center;
  }

  /* ===== Top bar ===== */
  .page {
    flex: 1;
    min-width: 0;
  }

  .topbar {
    display: flex;
    align-items: center;
    height: 64px;
    padding: 0 6px 0 33px;
    background: #fff;
  }

  .crumbs {
    display: flex;
    align-items: center;
    gap: 11px;
    letter-spacing: 0.018em;
    margin-right: auto;
  }

  .crumbs .current {
    font-weight: 500;
  }

  .store {
    display: flex;
    align-items: center;
    gap: 8px;
    height: 36px;
    padding: 0 16px 0 44px;
    margin-right: 8px;
    border: 1px solid var(--line);
    border-radius: 4px;
    font-weight: 500;
    letter-spacing: 0.09em;
  }

  .search {
    display: flex;
    align-items: center;
    width: 256px;
    height: 36px;
    padding: 0 8px;
    border: 1px solid var(--line);
    border-radius: 4px;
    background: #fafafa;
    color: var(--muted);
  }

  .search input {
    flex: 1;
    min-width: 0;
    padding-left: 8px;
    outline: 0;
    letter-spacing: 0.018em;
  }

  .search input::placeholder {
    color: var(--muted);
    opacity: 1;
  }

  kbd {
    height: 24px;
    padding: 0 8px;
    border: 1px solid var(--line);
    border-radius: 4px;
    background: #fff;
    font: 12px/22px Roboto, "Noto Sans", "DejaVu Sans", sans-serif;
  }

  .tools {
    display: grid;
    grid-template-columns: 48px 59px 62px 54px 54px 47px;
    margin-left: 10px;
  }

  .tools button {
    position: relative;
    display: grid;
    place-items: center;
    height: 40px;
  }

  .tools .sky {
    color: #2aa5f5;
  }

  .tools .primary-text {
    color: var(--primary);
  }

  .badge {
    position: absolute;
    left: 50%;
    height: 13px;
    border-radius: 6px;
    color: #fff;
    font-size: 10px;
    font-weight: 500;
    line-height: 13px;
    letter-spacing: 0.09em;
    text-align: center;
  }

  .badge-gift {
    top: 6px;
    width: 18px;
    background: var(--primary);
  }

  .badge-alert,
  .badge-count {
    width: 23px;
    margin-left: -5px;
  }

  .badge-alert {
    top: 4px;
    background: #f44336;
  }

  .badge-count {
    top: 20px;
    background: #2196f3;
  }

  /* ===== Integration tabs ===== */
  .subbar {
    display: flex;
    align-items: center;
    gap: 24px;
    padding: 8px 32px;
    border-bottom: 1px solid var(--line);
    background: #fff;
  }

  .tabs {
    flex: 1;
    display: flex;
    flex-wrap: wrap;
    gap: 4px;
  }

  .tab {
    display: flex;
    align-items: center;
    gap: 7px;
    height: 28px;
    padding: 0 12px 0 9px;
    border-radius: 4px;
    color: #000;
    font-size: 12px;
    font-weight: 500;
  }

  .tab.selected {
    background: var(--primary);
    color: #fff;
  }

  .new-btn {
    display: flex;
    align-items: center;
    gap: 8px;
    height: 36px;
    padding: 0 12px 0 16px;
    border-radius: 4px;
    background: var(--primary);
    color: #fff;
    font-weight: 500;
    letter-spacing: 0.09em;
  }

  /* ===== Content ===== */
  main {
    padding: 24px;
  }

  .title-row {
    display: flex;
    justify-content: space-between;
    align-items: flex-end;
    margin-bottom: 16px;
  }

  h1 {
    margin-bottom: 8px;
    color: #000;
    font-size: 30px;
    font-weight: 700;
    line-height: 36px;
  }

  .title-row p {
    color: var(--muted);
    font-size: 16px;
    line-height: 24px;
    letter-spacing: 0.031em;
  }

  .title-actions {
    display: flex;
    align-items: center;
    gap: 8px;
  }

  .range {
    display: flex;
    align-items: center;
    width: 190px;
    height: 40px;
    padding: 0 11px;
    border: 1px solid #999;
    border-radius: 4px;
  }

  .range > :global(svg) {
    color: #616161;
  }

  .range select {
    flex: 1;
    min-width: 0;
    padding-left: 6px;
    appearance: none;
    letter-spacing: 0.018em;
  }

  .btn {
    display: inline-flex;
    align-items: center;
    gap: 8px;
    height: 28px;
    padding: 0 12px 0 9px;
    border-radius: 4px;
    font-size: 12px;
    font-weight: 500;
    letter-spacing: 0.09em;
    white-space: nowrap;
  }

  .btn.teal {
    border: 1px solid #45aaa2;
    color: #45aaa2;
  }

  .btn.tonal {
    background: #e0f2fb;
    color: var(--primary);
  }

  .btn.tonal:disabled {
    opacity: 0.26;
  }

  .btn.outlined {
    border: 1px solid #1f1f1f;
  }

  .stats {
    display: grid;
    grid-template-columns: repeat(4, 1fr);
    gap: 24px;
    margin-bottom: 20px;
  }

  .stat {
    padding: 16px;
    border-radius: 12px;
    background: #fff;
    box-shadow: 0 1px 3px rgba(0, 0, 0, 0.12);
  }

  .stat-body {
    display: flex;
    align-items: center;
    gap: 12px;
  }

  .tile {
    display: grid;
    place-items: center;
    width: 40px;
    height: 40px;
    border-radius: 8px;
  }

  .tile.orange {
    background: #fff0de;
    color: #fb9511;
  }

  .tile.red {
    background: #ffebee;
    color: #b00020;
  }

  .tile.blue {
    background: #e3f2fd;
    color: var(--primary);
  }

  .stat-text {
    color: #666;
    font-size: 12px;
    letter-spacing: 0.033em;
  }

  .stat-value {
    margin-bottom: 2px;
    color: #000;
    font-size: 24px;
    font-weight: 700;
    line-height: 30px;
  }

  .stat-value.orange {
    color: #fb8c00;
  }

  .stat-value.red {
    color: #b00020;
  }

  .notice {
    display: flex;
    align-items: center;
    gap: 16px;
    min-height: 44px;
    padding: 8px 16px;
    margin-bottom: 16px;
    border-radius: 4px;
    background: #e0eef9;
    color: #2196f3;
    font-size: 16px;
    line-height: 24px;
  }

  .notice a {
    margin-left: 4px;
    color: #0d92dc;
    text-decoration: underline;
  }

  .list-head {
    display: flex;
    justify-content: space-between;
    align-items: center;
    margin-bottom: 12px;
    color: var(--muted);
    letter-spacing: 0.018em;
  }

  .toggle {
    display: flex;
    height: 30px;
    border: 1px solid var(--line);
    border-radius: 4px;
    overflow: hidden;
  }

  .toggle button {
    display: flex;
    align-items: center;
    gap: 8px;
    padding: 0 12px 0 9px;
    color: #1f1f1f;
    font-size: 12px;
    font-weight: 500;
    letter-spacing: 0.09em;
  }

  .toggle .on {
    background: #dceffa;
    color: var(--primary);
  }

  /* ===== Routes ===== */
  .route {
    margin-bottom: 12px;
    border: 1px solid var(--line);
    border-radius: 4px;
    background: #fff;
  }

  .route-head {
    display: flex;
    align-items: center;
    min-height: 52px;
    padding: 0 16px;
  }

  .expander {
    margin-right: 12px;
  }

  .path,
  .route-side {
    display: flex;
    align-items: center;
  }

  .path {
    gap: 8px;
    color: var(--muted);
    font-size: 12px;
    letter-spacing: 0.033em;
  }

  .path strong {
    color: #1f1f1f;
    font-size: 14px;
    font-weight: 700;
    letter-spacing: 0.018em;
  }

  .path .ok {
    color: #4caf50;
  }

  .path .bad {
    color: #b00020;
  }

  .route-side {
    gap: 12px;
    margin-left: auto;
  }

  .pill {
    display: inline-flex;
    align-items: center;
    height: 26px;
    padding: 0 10px;
    border-radius: 13px;
    font-size: 12px;
    font-weight: 500;
    letter-spacing: 0.033em;
    white-space: nowrap;
  }

  .pill.with-icon {
    gap: 5px;
    padding-left: 5px;
  }

  .pill.red {
    background: #f5dfe3;
    color: #b00020;
  }

  .pill.orange {
    background: #fff0de;
    color: #fb8c00;
  }

  .pill.green {
    background: #e9f5e9;
    color: #4caf50;
  }

  .pill.grey {
    background: #eee;
    color: var(--muted);
  }

  .pill.blue {
    background: #e0f2fb;
    color: var(--primary);
  }

  .route-body {
    padding: 12px 16px 16px;
    border-top: 1px solid var(--line);
  }

  .table-box {
    border: 1px solid var(--line);
    border-radius: 4px;
  }

  table {
    width: 100%;
    border-collapse: separate;
    border-spacing: 0;
    font-size: 12px;
    letter-spacing: 0.033em;
  }

  th {
    height: 40px;
    padding: 0 0 0 16px;
    border-bottom: 1px solid var(--line);
    background: #fafafa;
    font-size: 14px;
    font-weight: 500;
    letter-spacing: 0;
    text-align: left;
    white-space: nowrap;
  }

  .th {
    display: inline-flex;
    align-items: center;
    gap: 4px;
    vertical-align: middle;
  }

  .th > :global(svg) {
    color: var(--muted);
  }

  td {
    height: 50px;
    padding: 0 0 0 16px;
    border-bottom: 1px solid var(--line);
    white-space: nowrap;
  }

  td a {
    color: var(--primary);
  }

  td .pill,
  td .btn {
    vertical-align: middle;
  }

  .strong {
    font-weight: 700;
  }

  .medium {
    font-weight: 500;
  }

  .muted {
    color: var(--muted);
  }

  .place {
    display: flex;
    align-items: center;
    color: var(--muted);
  }

  .c-id {
    width: 68px;
  }

  .c-order {
    width: 90px;
  }

  .c-date {
    width: 120px;
  }

  .c-qty {
    width: 56px;
    padding-right: 16px;
    text-align: right;
  }

  .c-status {
    width: 114px;
  }

  .c-should {
    width: 149px;
  }

  .c-has {
    width: 233px;
  }

  .c-reserved {
    width: 113px;
  }

  .c-fulfilled {
    width: 156px;
  }

  .c-placement {
    width: 117px;
  }

  .c-provider {
    width: 102px;
  }

  .c-action {
    width: 114px;
    padding-right: 16px;
    text-align: right;
  }

  .table-foot {
    display: flex;
    align-items: center;
    height: 62px;
    padding: 0 12px 0 16px;
    color: var(--muted);
    font-size: 12px;
    letter-spacing: 0.033em;
  }

  .pager {
    display: flex;
    align-items: center;
    gap: 10px;
    margin: 0 16px 0 auto;
    color: #b8b8b8;
  }

  .pager button {
    display: grid;
    place-items: center;
    width: 28px;
    height: 28px;
    border-radius: 8px;
  }

  .pager .page-no {
    background: #f5f5f5;
  }

  .per-page {
    position: relative;
    display: flex;
    align-items: center;
    width: 100px;
    height: 32px;
    padding-right: 11px;
    border: 1px solid #999;
    border-radius: 4px;
  }

  .per-page label {
    position: absolute;
    top: -11px;
    left: 11px;
    padding: 0 4px;
    background: #fff;
  }

  .per-page select {
    flex: 1;
    min-width: 0;
    height: 30px;
    padding-left: 15px;
    appearance: none;
    color: #555;
  }

  /* ===== Toast ===== */
  .toast {
    position: fixed;
    top: 8px;
    left: 0;
    right: 0;
    display: flex;
    justify-content: space-between;
    align-items: center;
    width: 344px;
    height: 48px;
    margin: 0 auto;
    padding: 0 20px 0 16px;
    border-radius: 4px;
    background: #4caf50;
    box-shadow: 0 3px 8px rgba(0, 0, 0, 0.35);
    color: #fff;
    letter-spacing: 0.018em;
  }
</style>
